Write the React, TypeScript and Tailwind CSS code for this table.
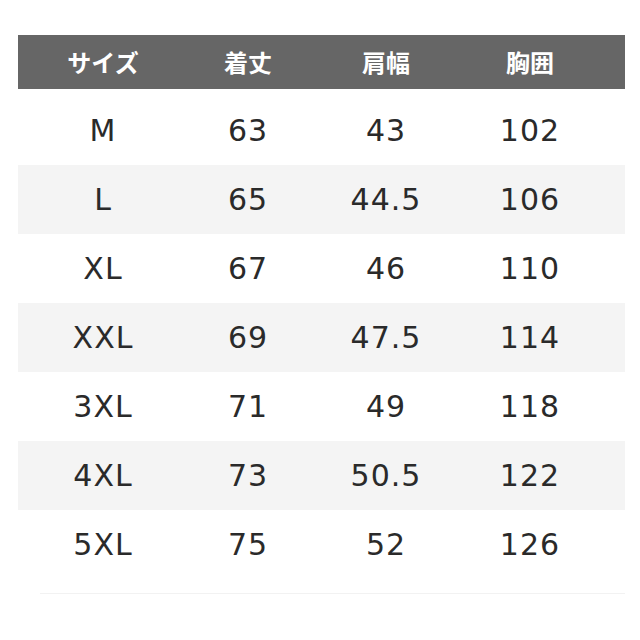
import React from "react";

const rows: [string, string, string, string][] = [
  ["M", "63", "43", "102"],
  ["L", "65", "44.5", "106"],
  ["XL", "67", "46", "110"],
  ["XXL", "69", "47.5", "114"],
  ["3XL", "71", "49", "118"],
  ["4XL", "73", "50.5", "122"],
  ["5XL", "75", "52", "126"],
];

const grid = "grid grid-cols-[170px_120px_156px_161px]";

export default function App() {
  return (
    <div className="w-[640px] h-[640px] bg-white pt-[35px] pl-[18px]">
      <div className="w-[607px]">
        <div
          className={`${grid} h-[54px] items-center bg-[#666666] text-white text-[24px] font-bold`}
          style={{ fontFamily: '"Noto Sans CJK JP", "Noto Sans", sans-serif' }}
        >
          <div className="text-center">サイズ</div>
          <div className="text-center">着丈</div>
          <div className="text-center">肩幅</div>
          <div className="text-center pr-[29px]">胸囲</div>
        </div>
        <div className="mt-[7px]">
          {rows.map((r, i) => (
            <div
              key={r[0]}
              className={`${grid} h-[69px] items-center text-[30px] tracking-[1px] text-[#2a2a2a] ${i % 2 === 1 ? "bg-[#f4f4f4]" : "bg-white"}`}
              style={{ fontFamily: '"DejaVu Sans", sans-serif' }}
            >
              <div className="text-center">{r[0]}</div>
              <div className="text-center">{r[1]}</div>
              <div className="text-center">{r[2]}</div>
              <div className="text-center pr-[29px]">{r[3]}</div>
            </div>
          ))}
        </div>
        <div className="mt-[14px] ml-[22px] h-px bg-[#f2f2f2]" />
      </div>
    </div>
  );
}
